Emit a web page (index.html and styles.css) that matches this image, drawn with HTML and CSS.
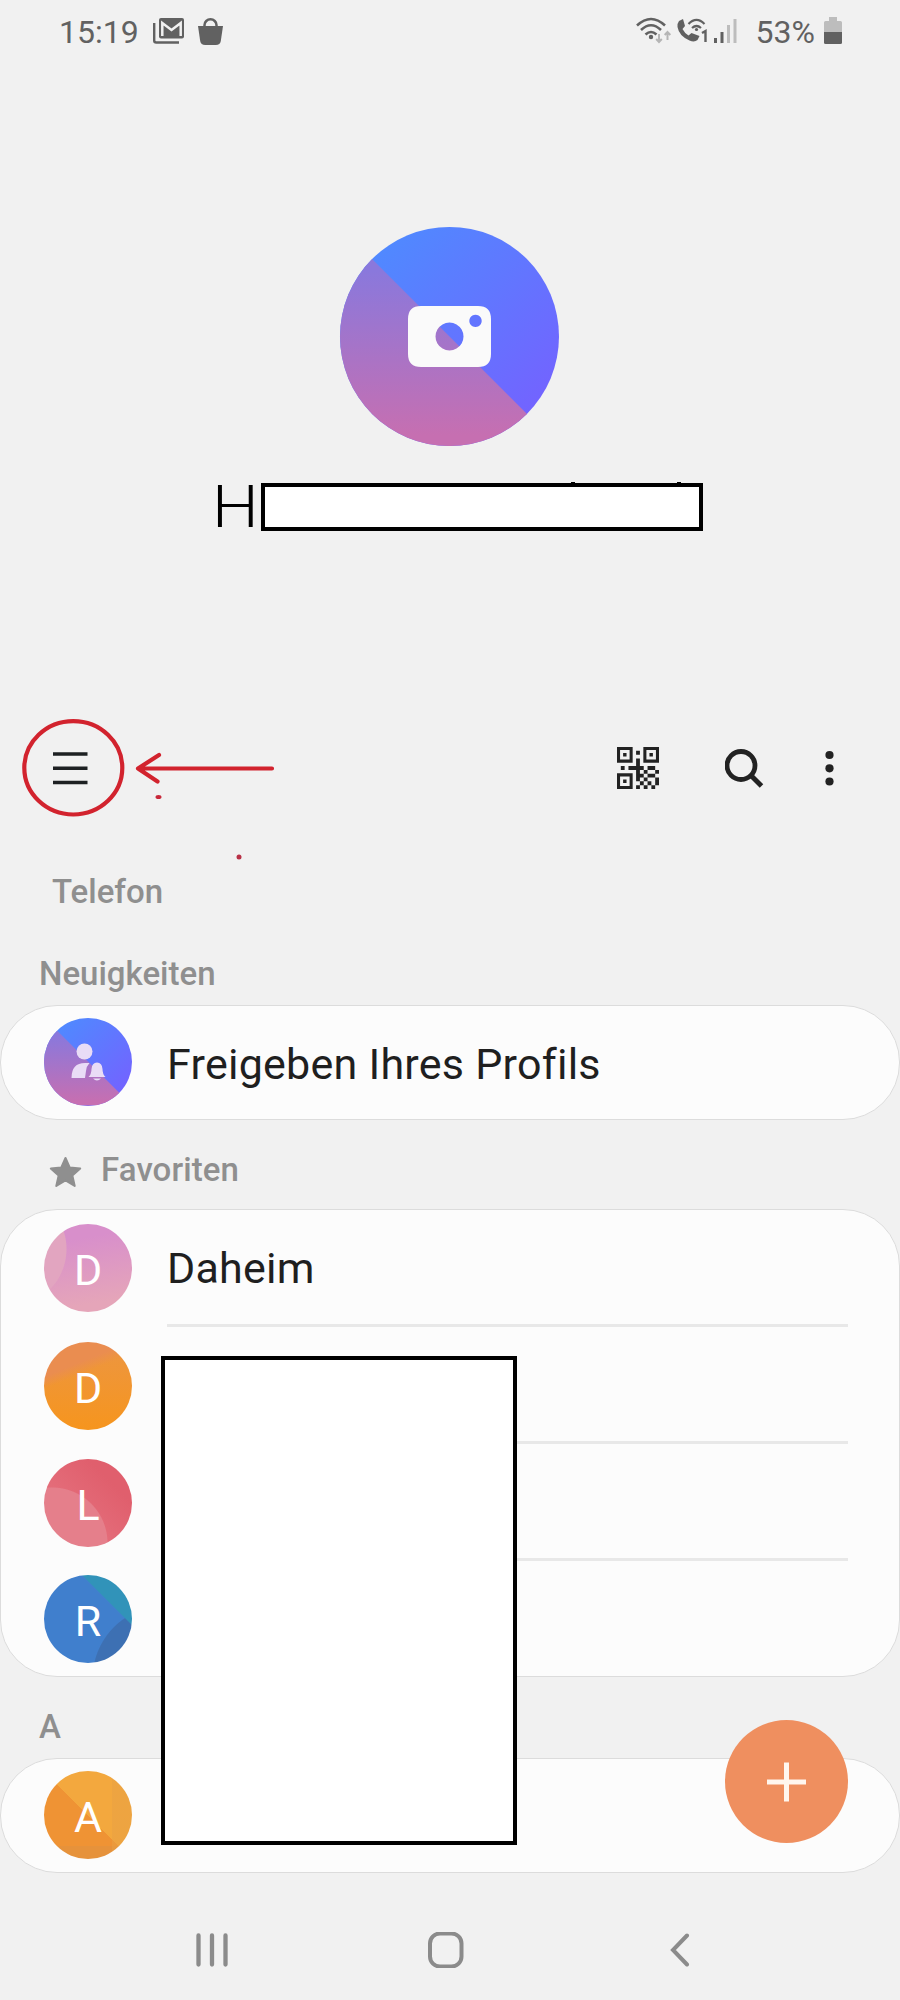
FILE: index.html
```html
<!DOCTYPE html>
<html lang="de">
<head>
<meta charset="utf-8">
<title>Kontakte</title>
<link rel="stylesheet" href="styles.css">
</head>
<body>
<div class="phone">
  <header class="status">
    <span class="clock">15:19</span>
    <svg class="mail" width="32" height="26" viewBox="0 0 32 26"><path d="M1.200 5v17.500q0 2 2 2H26" fill="none" stroke="#616161" stroke-width="2.400"/><rect x="6" y="0" width="25" height="20.500" rx="2" fill="#616161"/><path d="M9.300 18V5l9.200 7 9.200-7v13" fill="none" stroke="#f1f1f1" stroke-width="2.500"/></svg>
    <svg class="bag" width="27" height="27" viewBox="0 0 27 27"><path d="M7.500 9V7a6 5.700 0 0 1 12 0v2" fill="none" stroke="#616161" stroke-width="2.500"/><path d="M1 8h25l-2.200 15q-.6 4-5 4H8.200q-4.400 0-5-4z" fill="#616161"/></svg>
    <svg class="signals" width="104" height="30" viewBox="0 0 104 30">
      <g fill="none" stroke="#616161" stroke-width="2.600"><path d="M1 9.500q14-13 28 0M5 14q10-9.500 20 0M9.500 18.500q5.500-5 11 0"/><path d="M52.500 8q8-8 16 0M56 12q4.500-4 9 0" stroke-width="2.200"/></g>
      <circle cx="15" cy="21" r="2.200" fill="#616161"/><circle cx="60.500" cy="13.500" r="1.600" fill="#616161"/>
      <path d="M23 18v8m-2.800-3 2.800 3 2.800-3M31.500 24v-8m-2.800 3 2.800-3 2.800 3" fill="none" stroke="#b5b5b5" stroke-width="2"/>
      <path d="M43 5l4-2 2 7-2.500 3q2 4 6 6.500l3-2.500 8 3-2 4q-3 2.500-8 .5Q43 20 41.500 11q-.2-4 1.500-6z" fill="#616161"/>
      <path d="M66 17l3.500-2v11" fill="none" stroke="#616161" stroke-width="2.400"/>
      <path d="M79.500 22v5M86 16v11" stroke="#616161" stroke-width="3"/><path d="M92.500 9v18M99 3v24" stroke="#bdbdbd" stroke-width="3"/>
    </svg>
    <span class="percent">53%</span>
    <svg class="battery" width="18" height="27" viewBox="0 0 18 27"><path d="M5 0h8v4h3.500q1.500 0 1.500 1.500V15H0V5.500Q0 4 1.500 4H5z" fill="#bdbdbd"/><path d="M0 15h18v10.500q0 1.500-1.500 1.500h-15Q0 27 0 25.500z" fill="#616161"/></svg>
  </header>

  <section class="hero">
    <div class="photo">
      <svg width="84" height="61" viewBox="0 0 84 61"><path fill="#fafafa" fill-rule="evenodd" d="M13 0h57q13 0 13 13v35q0 13-13 13H13Q0 61 0 48V13Q0 0 13 0zM41.500 16.500a14 14 0 1 0 .01 0zM67.500 8.700a6.200 6.200 0 1 0 .01 0z"/></svg>
    </div>
    <div class="name"><span class="name-text">Ha</span><span class="mask name-mask"></span></div>
  </section>

  <nav class="toolbar">
    <svg class="menu" width="35" height="34" viewBox="0 0 35 34"><path d="M0 3h34.500M0 17.300h34.500M0 31.500h34.500" stroke="#1d2022" stroke-width="3.600"/></svg>
    <svg class="qr" width="42" height="42" viewBox="0 0 11 11"><g fill="none" stroke="#222" stroke-width=".8"><path d="M.4.4h3.300v3.300H.4zM7.300.4h3.300v3.300H7.300zM.4 7.300h3.300v3.300H.4z"/></g><path fill="#222" d="M1.600 1.600h.9v.9h-.9zM8.500 1.600h.9v.9h-.9zM1.600 8.500h.9v.9h-.9zM5 1h1v1H5zM5 3h1v2H5zM1 5h1v1H1zM3 5h4v1H3zM8 5h2v1H8zM5 6h1v3H5zM7 6h1v1H7zM10 6h1v1h-1zM6 7h1v1H6zM8 7h2v1H8zM7 8h1v1H7zM10 8h1v2h-1zM6 9h1v1H6zM8 9h1v1H8zM5 10h1v1H5zM7 10h1v1H7zM9 10h1v1H9z"/></svg>
    <svg class="search" width="39" height="40" viewBox="0 0 39 40"><circle cx="16" cy="16.500" r="14" fill="none" stroke="#222" stroke-width="4.800"/><path d="M26 26.500 36.500 37" stroke="#222" stroke-width="5"/></svg>
    <svg class="more" width="9" height="36" viewBox="0 0 9 36"><g fill="#222"><circle cx="4.500" cy="5" r="4.100"/><circle cx="4.500" cy="18.300" r="4.100"/><circle cx="4.500" cy="31.500" r="4.100"/></g></svg>
    <svg class="annotation" width="290" height="150" viewBox="0 0 290 150"><g fill="none" stroke="#d2232e" stroke-width="4.200" stroke-linecap="round" stroke-linejoin="round"><ellipse cx="73.300" cy="57.800" rx="49" ry="46.700"/><path d="M138 58.500h134M159 45l-21 13.500L157.500 71.500"/></g><ellipse cx="158.500" cy="87" rx="3" ry="2.100" fill="#c8283a"/><circle cx="239" cy="147" r="2.500" fill="#b83046"/></svg>
  </nav>

  <h2 class="label account">Telefon</h2>

  <h2 class="label news">Neuigkeiten</h2>
  <section class="card">
    <div class="row">
      <span class="avatar share"><svg width="35" height="38" viewBox="0 0 35 38"><g fill="#e9dcf6"><circle cx="13.500" cy="8.500" r="8"/><path d="M.5 35q0-15 13.500-15h4.500q-3 3-3.500 8l-1 7z"/><path d="M17.500 34q3-3 3-8 .5-6.500 5.500-6.500t5.500 6.500q0 5 3 8zM22 35.500h8q-4 4-8 0z"/></g></svg></span>
      <span class="title wide">Freigeben Ihres Profils</span>
    </div>
  </section>

  <h2 class="label favorites"><svg width="33" height="33" viewBox="0 0 33 33"><path d="M16.500 2l4.300 9.600 10.400 1-7.800 7 2.300 10.300-9.200-5.400-9.200 5.400 2.300-10.300-7.800-7 10.400-1z" fill="#8f8f8f" stroke="#8f8f8f" stroke-width="2" stroke-linejoin="round"/></svg><span>Favoriten</span></h2>
  <section class="card">
    <div class="row"><span class="avatar pink">D</span><span class="title wide">Daheim</span></div>
    <div class="row"><span class="avatar orange">D</span><span class="title"></span></div>
    <div class="row"><span class="avatar red">L</span><span class="title"></span></div>
    <div class="row"><span class="avatar blue">R</span><span class="title"></span></div>
  </section>

  <h2 class="label letter">A</h2>
  <section class="card">
    <div class="row"><span class="avatar amber">A</span><span class="title"></span></div>
  </section>

  <div class="mask list-mask"></div>
  <div class="fab"><svg width="40" height="40" viewBox="0 0 40 40"><path d="M19.500 .5v39M0 20h39" stroke="#fff6ee" stroke-width="5"/></svg></div>

  <footer class="system">
    <svg width="32" height="34" viewBox="0 0 32 34"><path d="M2.500 2.500v29M16 2.500v29M29.500 2.500v29" stroke="#8b8b8b" stroke-width="4.300" stroke-linecap="round"/></svg>
    <svg class="home" width="36" height="36" viewBox="0 0 36 36"><rect x="2" y="1.500" width="31.500" height="33" rx="10" fill="none" stroke="#8b8b8b" stroke-width="4"/></svg>
    <svg class="back" width="20" height="34" viewBox="0 0 20 34"><path d="M17 2.500 3 17 17 31.500" fill="none" stroke="#8b8b8b" stroke-width="4" stroke-linecap="round"/></svg>
  </footer>
</div>
</body>
</html>
```

FILE: styles.css
```css
* { box-sizing: border-box; }
body { margin: 0; background: #f1f1f1; font-family: Roboto, sans-serif; color: #1f1f1f; }
svg { display: block; flex: none; }
.phone { position: relative; width: 900px; height: 2000px; overflow: hidden; display: flex; flex-direction: column; background: #f1f1f1; }
.phone > * { flex: none; }

.status { height: 64px; padding: 0 57px 0 59px; display: flex; align-items: flex-start; font-size: 32px; line-height: 64px; color: #616161; }
.clock { width: 94px; }
.mail { margin-top: 18px; }
.bag { margin: 18px 0 0 12px; }
.signals { margin: 16px 0 0 412px; }
.percent { margin-left: 15.5px; width: 68.5px; }
.battery { margin-top: 17px; }

.hero { height: 646px; padding-top: 163px; display: flex; flex-direction: column; align-items: center; }
.photo { width: 219px; height: 219px; margin-right: 1px; border-radius: 50%; display: flex; align-items: center; justify-content: center;
  background: linear-gradient(135deg, #4e8bff 10%, #7264ff 85%); position: relative; overflow: hidden; }
.photo::before, .share::before { content: ""; position: absolute; inset: 0; background: linear-gradient(#8a78dc 20%, #c66fb1 95%); clip-path: polygon(0 0, 100% 100%, 0 100%); }
.photo svg, .share svg { position: relative; }
.name { position: relative; align-self: flex-start; margin: 21px 0 0 212px; font-size: 60px; font-weight: 300; line-height: 80px; color: #000; }
.name-text { display: inline-block; transform: scaleX(1.1); transform-origin: 0 50%; letter-spacing: -.8px; }
.mask { position: absolute; background: #fff; border: 4px solid #000; }
.name-mask { left: 49px; top: 16px; width: 442px; height: 48px; }
.name-mask::before, .name-mask::after { content: ""; position: absolute; top: -5px; width: 4px; height: 2px; background: #000; }
.name-mask::before { left: 306px; }
.name-mask::after { left: 412px; }

.toolbar { position: relative; height: 140px; padding: 0 66px 24px 53px; display: flex; align-items: center; }
.qr { margin-left: 529px; }
.search { margin: 1px 0 0 66px; }
.more { margin-left: 61px; }
.annotation { position: absolute; left: 0; top: 0; }

.label { margin: 0; font-size: 33px; font-weight: 500; color: #8f8f8f; display: flex; align-items: center; }
.account { height: 83px; padding-left: 52px; }
.news { height: 72px; padding: 9px 0 0 39px; }
.favorites { height: 89px; padding: 10px 0 0 49px; gap: 19px; letter-spacing: .1px; }
.favorites svg { margin-top: 5px; }
.letter { height: 81px; padding: 18px 0 0 39px; }

.card { background: #fcfcfc; border: 1px solid #dcdcdc; border-radius: 57px; padding: 0 51px 0 43px; min-height: 115px; }
.row { height: 117px; display: flex; align-items: center; font-size: 43px; gap: 35px; }
.row:only-child { height: 113px; }
.avatar { position: relative; flex: none; width: 88px; height: 88px; border-radius: 50%; overflow: hidden; display: flex; align-items: center; justify-content: center; color: #fff; padding-top: 4px; }
.title { flex: 1; height: 100%; display: flex; align-items: center; padding-top: 2px; }
.wide { letter-spacing: .25px; }
.row:not(:last-child) .title { border-bottom: 3px solid #e8e8e8; }
.card .row:last-child:not(:only-child) { height: 115px; }

.share { padding: 0; margin-bottom: 2px; background: linear-gradient(135deg, #4e8bff 10%, #7264ff 85%); }
.pink { margin-bottom: 2px; background: radial-gradient(circle at -35px 25px, #e2a5c0 57px, transparent 58px), linear-gradient(170deg, #d88fcb 20%, #e5a5b9 85%); }
.orange { background: linear-gradient(158deg, #ea8d50 28%, transparent 38%), linear-gradient(#ec9642, #f6951e); }
.red { background: radial-gradient(circle at 8px 84px, #e57f8b 55px, transparent 56px), linear-gradient(45deg, #e87a86, #e05f6d 75%); }
.blue { background: linear-gradient(225deg, #3193b9 28%, transparent 29%), radial-gradient(circle at 122px 104px, #3d70b3 73px, transparent 74px), #407fcd; }
.amber { margin-bottom: 2px; background: linear-gradient(90deg, transparent 77%, #e8a04480 77%), linear-gradient(transparent 85%, #e6923b 85%), linear-gradient(45deg, #ef9334 49.500%, #f3a83e 50%); }

.list-mask { left: 161px; top: 1356px; width: 356px; height: 489px; }
.fab { position: absolute; left: 725px; top: 1720px; width: 123px; height: 123px; border-radius: 50%; background: #ef8f5f; display: flex; align-items: center; justify-content: center; }

.system { flex: 1; padding-left: 196px; margin-top: 27px; height: 100px; display: flex; align-items: center; }
.home { margin-left: 200px; }
.back { margin-left: 206px; }
```
